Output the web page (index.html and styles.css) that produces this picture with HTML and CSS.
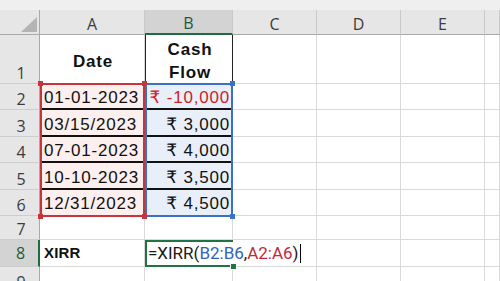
FILE: index.html
```html
<!DOCTYPE html>
<html>
<head>
<meta charset="utf-8">
<link rel="stylesheet" href="styles.css">
</head>
<body>
<div class="sheet">
  <div class="strip"></div>
  <div class="corner"><span class="tri"></span></div>
  <div class="col">A</div><div class="col sel">B</div><div class="col">C</div><div class="col">D</div><div class="col">E</div><div class="col"></div>

  <div class="row">1</div><div class="cell head">Date</div><div class="cell head b1">Cash<br>Flow</div><div class="cell"></div><div class="cell"></div><div class="cell"></div><div class="cell"></div>

  <div class="row">2</div><div class="cell date">01-01-2023</div><div class="cell amt neg">₹ -10,000</div><div class="cell"></div><div class="cell"></div><div class="cell"></div><div class="cell"></div>

  <div class="row">3</div><div class="cell date">03/15/2023</div><div class="cell amt">₹ 3,000</div><div class="cell"></div><div class="cell"></div><div class="cell"></div><div class="cell"></div>

  <div class="row">4</div><div class="cell date">07-01-2023</div><div class="cell amt">₹ 4,000</div><div class="cell"></div><div class="cell"></div><div class="cell"></div><div class="cell"></div>

  <div class="row">5</div><div class="cell date">10-10-2023</div><div class="cell amt">₹ 3,500</div><div class="cell"></div><div class="cell"></div><div class="cell"></div><div class="cell"></div>

  <div class="row">6</div><div class="cell date end">12/31/2023</div><div class="cell amt end">₹ 4,500</div><div class="cell"></div><div class="cell"></div><div class="cell"></div><div class="cell"></div>

  <div class="row">7</div><div class="cell"></div><div class="cell"></div><div class="cell"></div><div class="cell"></div><div class="cell"></div><div class="cell"></div>

  <div class="row sel">8</div><div class="cell lbl">XIRR</div><div class="cell edit"><span class="ftxt">=XIRR(<span class="rb">B2:B6</span>,<span class="ra">A2:A6</span>)</span><span class="caret"></span><span class="fh"></span></div><div class="cell"></div><div class="cell"></div><div class="cell"></div><div class="cell"></div>

  <div class="row">9</div><div class="cell"></div><div class="cell"></div><div class="cell"></div><div class="cell"></div><div class="cell"></div><div class="cell"></div>

  <div class="ranges">
    <div class="range red"><i class="h tl"></i><i class="h tr"></i><i class="h bl"></i><i class="h br"></i></div>
    <div class="range blue"><i class="h tr"></i><i class="h br"></i></div>
  </div>
</div>
</body>
</html>
```
FILE: styles.css
```css
html, body {
  margin: 0;
  padding: 0;
  background: #fff;
}

.sheet, .ranges {
  display: grid;
  grid-template-columns: 40px 105px 88px 84px 84px 84px 1fr;
  grid-template-rows: 10px 25px 49px 26.4px 26.4px 26.4px 26.4px 26.4px 23.6px 27px 26px;
}

.sheet {
  position: relative;
  width: 500px;
  height: 281px;
  overflow: hidden;
  background: #fff;
}

.strip {
  grid-column: 1 / -1;
  background: #efefef;
}

.corner {
  background: #e6e6e6;
  border-right: 1px solid #a9a9a9;
  border-bottom: 1px solid #a9a9a9;
  display: flex;
  justify-content: flex-end;
  align-items: flex-end;
  padding: 0 2px 2px 0;
}

.tri {
  width: 16px;
  height: 15px;
  background: #b4b4b4;
  clip-path: polygon(100% 0, 100% 100%, 0 100%);
}

.col {
  background: #e6e6e6;
  border-right: 1px solid #c9c9c9;
  border-bottom: 1px solid #a9a9a9;
  font-family: "Open Sans", sans-serif;
  font-size: 16px;
  line-height: 20px;
  color: #3c3c3c;
  display: flex;
  justify-content: center;
  align-items: flex-end;
}

.col.sel {
  background: #d3d3d3;
  color: #1d5a36;
  border-bottom: 2px solid #1f6b42;
}

.row {
  background: #e6e6e6;
  border-right: 1px solid #a9a9a9;
  border-bottom: 1px solid #cdcdcd;
  font-family: "Open Sans", sans-serif;
  font-size: 16px;
  line-height: 20px;
  color: #3c3c3c;
  display: flex;
  justify-content: center;
  align-items: flex-end;
  padding-left: 3px;
}

.row.sel {
  background: #d3d3d3;
  color: #1d5a36;
  border-right: 2px solid #1f6b42;
  align-items: center;
}

.cell {
  border-right: 1px solid #d9d9d9;
  border-bottom: 1px solid #d9d9d9;
  font-family: "Liberation Sans", "DejaVu Sans", sans-serif;
  font-size: 17px;
  letter-spacing: 0.8px;
  line-height: 20px;
  color: #111;
  display: flex;
  align-items: flex-end;
  padding: 0 2px 0 4px;
  white-space: nowrap;
  min-width: 0;
}

.cell.head {
  font-weight: bold;
  justify-content: center;
  text-align: center;
  align-items: center;
  line-height: 23px;
  padding-top: 4px;
}

.cell.b1 {
  border-left: 1px solid #222;
  border-right: 1px solid #222;
}

.cell.date {
  background: #fcefed;
  border-bottom: 2px solid #111;
}

.cell.amt {
  background: #e8eff9;
  border-bottom: 2px solid #111;
  justify-content: flex-end;
}

.cell.end {
  border-bottom-color: transparent;
}

.cell.neg {
  color: #d0202a;
}

.cell.lbl {
  font-weight: bold;
  font-size: 15px;
  letter-spacing: 0.2px;
  align-items: center;
}

.cell.edit {
  position: relative;
  z-index: 1;
  border: 2px solid #217346;
  border-right: 0;
  align-items: center;
  padding-left: 1px;
  font-family: Roboto, sans-serif;
  font-size: 17px;
  letter-spacing: 0;
  color: #1a1a1a;
  overflow: visible;
}

.ftxt {
  flex: none;
}

.rb {
  color: #2f64b9;
}

.ra {
  color: #c2283a;
}

.caret {
  flex: none;
  width: 1.5px;
  height: 19px;
  margin-left: 1px;
  background: #000;
}

.fh {
  position: absolute;
  right: -3px;
  bottom: -4px;
  width: 5px;
  height: 5px;
  background: #217346;
  box-shadow: 0 0 0 1px #fff;
}

.ranges {
  position: absolute;
  inset: 0;
  pointer-events: none;
  z-index: 2;
}

.range {
  grid-row: 4 / 9;
  position: relative;
  border: 2px solid;
  margin: -1px 0 -1px 0;
}

.range.red {
  grid-column: 2;
  border-color: #c6343c;
  z-index: 2;
}

.range.blue {
  grid-column: 3;
  border-color: #3a70c6;
  z-index: 1;
}

.h {
  position: absolute;
  width: 5px;
  height: 5px;
}

.red .h {
  background: #c6343c;
}

.blue .h {
  background: #3a70c6;
}

.h.tl { left: -4px; top: -4px; }
.h.tr { right: -4px; top: -4px; }
.h.bl { left: -4px; bottom: -4px; }
.h.br { right: -4px; bottom: -4px; }
```
